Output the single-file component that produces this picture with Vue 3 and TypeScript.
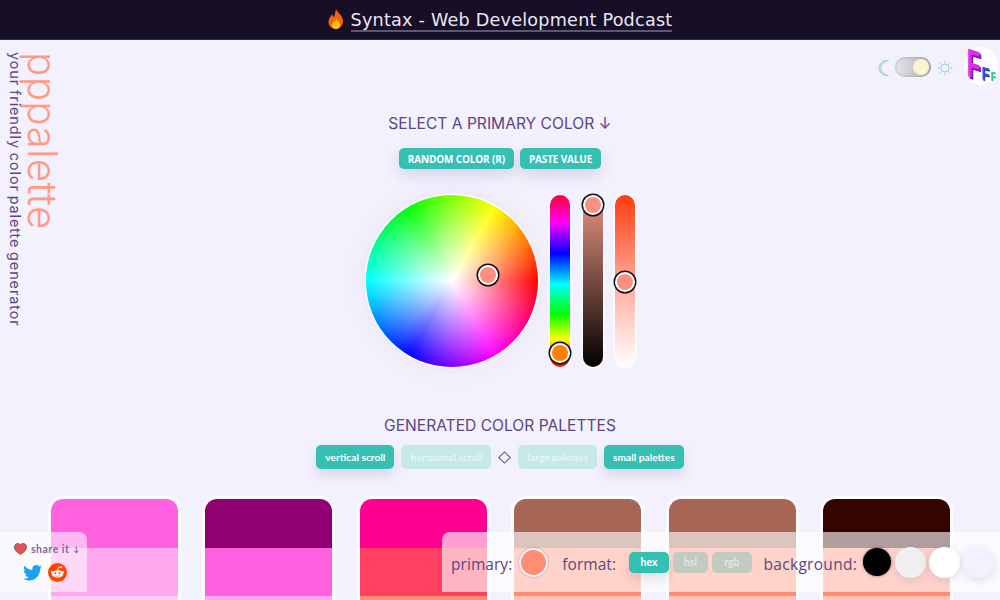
<script setup lang="ts">
interface Palette {
  bands: string[]
}

const primary = '#ff8d72'

const palettes: Palette[] = [
  { bands: ['#ff60e0', '#ffa8f0', '#ffd0f7'] },
  { bands: ['#900070', '#ff60e0', '#ffa8f0'] },
  { bands: ['#ff0090', '#ff4060', '#ff9070'] },
  { bands: ['#a66555', primary, '#ffc6b8'] },
  { bands: ['#a66555', primary, '#ffc6b8'] },
  { bands: ['#340500', primary, '#ffc6b8'] },
]

const swatches = ['#000000', '#efefef', '#ffffff', '#f3f1fd']
</script>

<template>
  <div class="page">
    <header class="topbar">
      <svg class="flame" viewBox="0 0 16 20" width="16" height="20">
        <path d="M8 0c1 3 6 6 7 11 .6 5-3 9-7 9s-8-3-7.500-8C1 9 3 7 4 5c.5 1.500 1 2.500 2 3 .8-2.500 1.500-5 2-8z" fill="#f4600c" />
        <path d="M8 9c.5 2 4 4 4 7 0 2.500-2 4-4 4s-4-1.500-4-4c0-2 1.500-3 2-4 .5.700 1 1 1.300 1 .3-1.300.4-2.800.7-4z" fill="#ffc21a" />
      </svg>
      <a class="topbar-link">Syntax - Web Development Podcast</a>
    </header>

    <div class="brand">
      <h1 class="brand-name">pppalette</h1>
      <p class="brand-tag">your friendly color palette generator</p>
    </div>

    <div class="theme">
      <svg class="moon" viewBox="0 0 12 18" width="12" height="18">
        <path d="M10.500 1.500C6 2.500 3 5.500 3 9s3 6.500 7.500 7.500C5 17 1 13.500 1 9s4-8 9.500-7.500z" fill="#bfe6e2" stroke="#8fd2cc" stroke-width=".8" />
      </svg>
      <div class="switch"><span class="knob" /></div>
      <svg class="sun" viewBox="0 0 18 18" width="16" height="16" fill="none" stroke="#8fd2cc" stroke-width="1.100">
        <circle cx="9" cy="9" r="4.500" />
        <path d="M9 .5v3M9 14.500v3M.5 9h3M14.500 9h3M3 3l2 2M13 13l2 2M15 3l-2 2M5 13l-2 2" />
      </svg>
      <div class="logo">
        <span class="logo-f big">F</span><span class="logo-f mid">F</span><span class="logo-f small">F</span>
      </div>
    </div>

    <main class="main">
      <h2 class="heading first">SELECT A PRIMARY COLOR ↓</h2>
      <div class="actions">
        <button class="btn">RANDOM COLOR (R)</button>
        <button class="btn">PASTE VALUE</button>
      </div>

      <section class="picker">
        <div class="wheel">
          <span class="handle wheel-handle" />
        </div>
        <div class="bar bar-hue"><span class="handle hue-handle" /></div>
        <div class="bar bar-value"><span class="handle value-handle" /></div>
        <div class="bar bar-sat"><span class="handle sat-handle" /></div>
      </section>

      <h2 class="heading second">GENERATED COLOR PALETTES</h2>
      <div class="options">
        <button class="chip">vertical scroll</button>
        <button class="chip off">horizontal scroll</button>
        <span class="diamond" />
        <button class="chip off">large palettes</button>
        <button class="chip">small palettes</button>
      </div>

      <section class="palettes">
        <article v-for="(p, i) in palettes" :key="i" class="card">
          <div v-for="(band, j) in p.bands" :key="j" class="band" :style="{ background: band }" />
        </article>
      </section>
    </main>

    <aside class="share">
      <div class="share-title">
        <svg viewBox="0 0 14 13" width="13" height="12">
          <path d="M7 12.500C3 9.800.5 7.500.5 4.300.5 2 2.300.5 4 .5c1.300 0 2.300.7 3 1.800C7.700 1.200 8.700.5 10 .5c1.700 0 3.500 1.500 3.500 3.800 0 3.200-2.500 5.500-6.500 8.200z" fill="#e8505b" stroke="#7c5a3c" stroke-width="1" />
        </svg>
        <span>share it</span><span class="share-arrow">↓</span>
      </div>
      <div class="share-icons">
        <svg viewBox="0 0 24 20" width="19" height="16">
          <path d="M24 2.400c-.9.400-1.800.7-2.800.8 1-.6 1.800-1.600 2.200-2.700-1 .6-2 1-3.100 1.200A4.900 4.900 0 0 0 11.900 6.200C7.800 6 4.200 4 1.700.9c-1.300 2.200-.7 5.100 1.500 6.600-.8 0-1.600-.2-2.200-.6 0 2.300 1.600 4.400 3.900 4.900-.7.200-1.500.2-2.200.1.600 2 2.400 3.400 4.600 3.400A9.900 9.900 0 0 1 0 17.300 14 14 0 0 0 7.500 19.500c9.100 0 14.300-7.700 14-14.600 1-.7 1.800-1.600 2.500-2.500z" fill="#1da1f2" />
        </svg>
        <svg viewBox="0 0 20 20" width="19" height="19">
          <circle cx="10" cy="10" r="10" fill="#ff4500" />
          <ellipse cx="10" cy="11.500" rx="6" ry="4" fill="#fff" />
          <circle cx="4.500" cy="9.800" r="1.300" fill="#fff" />
          <circle cx="15.500" cy="9.800" r="1.300" fill="#fff" />
          <circle cx="14" cy="4.500" r="1.100" fill="#fff" />
          <path d="M10 8l1-3.500 3 .3" fill="none" stroke="#fff" stroke-width=".8" />
          <circle cx="7.800" cy="10.800" r="1" fill="#ff4500" />
          <circle cx="12.200" cy="10.800" r="1" fill="#ff4500" />
          <path d="M7.800 13.300c1.300.9 3.100.9 4.400 0" fill="none" stroke="#ff4500" stroke-width=".7" />
        </svg>
      </div>
    </aside>

    <aside class="settings">
      <span class="label">primary:</span>
      <span class="primary-dot" :style="{ background: primary }" />
      <span class="label format">format:</span>
      <div class="formats">
        <button class="chip mini">hex</button>
        <button class="chip mini off">hsl</button>
        <button class="chip mini off">rgb</button>
      </div>
      <span class="label bg">background:</span>
      <div class="swatches">
        <span
          v-for="(c, i) in swatches"
          :key="c"
          class="swatch"
          :class="{ dark: i === 0 }"
          :style="{ background: c }"
        />
      </div>
    </aside>
  </div>
</template>

<style scoped>
.page {
  position: relative;
  height: 600px;
  overflow: hidden;
  background: #f3f1fd;
  color: #5b4680;
  font-family: Inter, "Liberation Sans", sans-serif;
}

.topbar {
  display: flex;
  align-items: center;
  justify-content: center;
  gap: 7px;
  height: 40px;
  padding-top: 2px;
  box-sizing: border-box;
  background: #170f27;
  border-bottom: 1px solid #2f2a3c;
}

.flame {
  margin-top: -3px;
}

.topbar-link {
  color: #ebe7f5;
  font-family: "DejaVu Sans", sans-serif;
  font-size: 17.6px;
  letter-spacing: 0.22px;
  line-height: 20px;
  border-bottom: 2px solid #5c5573;
}

.brand {
  position: absolute;
  top: 52px;
  left: 6px;
  display: flex;
  flex-direction: column;
  writing-mode: vertical-rl;
}

.brand-name {
  margin: 0;
  color: #ff9b85;
  font-size: 40.500px;
  font-weight: 300;
  line-height: 37px;
  letter-spacing: 0.3px;
}

.brand-tag {
  margin: 0;
  color: #5b4680;
  font-size: 14.500px;
  font-weight: 400;
  line-height: 18px;
  letter-spacing: 0.85px;
  word-spacing: -1px;
}

.theme {
  position: absolute;
  top: 47px;
  right: 2px;
  display: flex;
  align-items: center;
  gap: 6px;
}

.moon {
  margin-top: 3px;
}

.switch {
  display: flex;
  justify-content: flex-end;
  align-items: center;
  width: 36px;
  height: 20px;
  margin-left: -1px;
  margin-top: 2px;
  box-sizing: border-box;
  padding-right: 2px;
  border-radius: 10px;
  background: linear-gradient(90deg, #e6e5ea, #b0aeb8);
  box-shadow: inset 0 0 3px rgba(0, 0, 0, 0.25);
}

.knob {
  width: 16px;
  height: 16px;
  border-radius: 50%;
  background: #fbf5cf;
}

.sun {
  margin-top: 3px;
}

.logo {
  display: flex;
  align-items: flex-end;
  justify-content: center;
  width: 34px;
  height: 38px;
  margin-left: 5px;
  padding-bottom: 4px;
  box-sizing: border-box;
  border-radius: 50%;
  background: #fff;
  font-family: "Liberation Sans", sans-serif;
  font-weight: 700;
}

.logo-f {
  display: flex;
  justify-content: center;
  flex: none;
  line-height: 0.72;
}

.logo-f.big {
  width: 13px;
  color: #e22be8;
  font-size: 40px;
  margin-bottom: 2px;
  transform: scaleX(0.55) skewY(10deg);
  text-shadow: 2px 1px 0 #7a1ec0, 3px 2px 0 #4a1ea0;
}

.logo-f.mid {
  width: 9px;
  color: #2e5bf0;
  font-size: 18px;
  margin-left: 1px;
  transform: scaleX(0.72) skewY(10deg);
  text-shadow: 1px 1px 0 #1a2f90;
}

.logo-f.small {
  width: 6px;
  color: #22e0a0;
  font-size: 13px;
  transform: scaleX(0.6) skewY(10deg);
  text-shadow: 1px 0 0 #109068;
}

.main {
  display: flex;
  flex-direction: column;
  align-items: center;
}

.heading {
  margin: 0;
  color: #5b4680;
  font-size: 15.600px;
  font-weight: 400;
  line-height: 20px;
  text-align: center;
}

.heading.first {
  margin-top: 74px;
}

.heading.second {
  margin-top: 49px;
}

.actions {
  display: flex;
  gap: 6px;
  margin-top: 14px;
}

.btn {
  height: 21px;
  padding: 0 9px;
  border: none;
  border-radius: 5px;
  background: #35c0b3;
  box-shadow: 0 6px 14px rgba(60, 50, 110, 0.16);
  color: #fff;
  font-family: "Open Sans", sans-serif;
  font-size: 10px;
  font-weight: 700;
  letter-spacing: -0.15px;
}

.picker {
  display: flex;
  gap: 12px;
  margin-top: 26px;
  margin-left: 1px;
}

.wheel {
  position: relative;
  width: 172px;
  height: 172px;
  border-radius: 50%;
  background:
    radial-gradient(circle closest-side, #fff 0%, rgba(255, 255, 255, 0) 100%),
    conic-gradient(from 90deg, #f00, #f0f, #00f, #0ff, #0f0, #ff0, #f00);
  box-shadow: 0 0 0 1.500px #fff, 0 0 24px rgba(80, 60, 130, 0.08);
}

.bar {
  position: relative;
  width: 20px;
  height: 172px;
  border-radius: 10px;
  box-shadow: 0 0 0 1.500px rgba(255, 255, 255, 0.7);
}

.bar-hue {
  background: linear-gradient(180deg, #ff0040 0%, #ff0070 5%, #f0f 16%, #00f 34%, #0ff 52%, #0f0 69%, #ff0 84%, #f00 100%);
}

.bar-value {
  margin-left: 1px;
  background: linear-gradient(180deg, #ec9482 0%, #000 100%);
}

.bar-sat {
  background: linear-gradient(180deg, #ff3d10 0%, #ffb0a0 55%, #fff 100%);
}

.handle {
  position: absolute;
  box-sizing: border-box;
  width: 20px;
  height: 20px;
  border: 2px solid #fff;
  border-radius: 50%;
  background: #fa9080;
  box-shadow: 0 0 0 1.500px #15101c;
}

.wheel-handle {
  top: 70px;
  left: 112px;
}

.hue-handle {
  top: 148px;
  left: 0;
  background: #ff8000;
}

.value-handle {
  top: 0;
  left: 0;
}

.sat-handle {
  top: 77px;
  left: 0;
}

.options {
  display: flex;
  align-items: center;
  gap: 7px;
  margin-top: 9px;
}

.chip {
  height: 24px;
  padding: 0 9px;
  border: none;
  border-radius: 5px;
  background: #35c0b3;
  box-shadow: 0 6px 12px rgba(60, 50, 110, 0.14);
  color: #fff;
  font-family: Lato, sans-serif;
  font-size: 10.200px;
  font-weight: 700;
}

.chip.off {
  background: #c4e9e7;
  box-shadow: none;
  color: #e7f6f5;
}

.diamond {
  width: 7px;
  height: 7px;
  margin: 0 2px;
  border: 1.500px solid #5b4680;
  transform: rotate(45deg);
}

.palettes {
  display: grid;
  grid-template-columns: repeat(6, 127px);
  column-gap: 27.400px;
  margin-top: 30px;
  margin-left: 1px;
}

.card {
  display: flex;
  flex-direction: column;
  height: 145px;
  overflow: hidden;
  border-radius: 12px;
  box-shadow: 0 0 0 3px rgba(255, 255, 255, 0.75);
}

.band {
  flex: 0 0 48.500px;
}

.share {
  position: absolute;
  left: 0;
  top: 532px;
  width: 87px;
  height: 60px;
  box-sizing: border-box;
  padding-top: 11px;
  border-top-right-radius: 8px;
  background: rgba(255, 255, 255, 0.55);
}

.share-title {
  display: flex;
  align-items: center;
  gap: 4px;
  margin-left: 14px;
  color: #7a6a9c;
  font-family: Lato, sans-serif;
  font-size: 10.500px;
  font-weight: 700;
  letter-spacing: 0.5px;
}

.share-arrow {
  font-size: 8px;
}

.share-icons {
  display: flex;
  align-items: center;
  gap: 6px;
  margin: 8px 0 0 23px;
}

.settings {
  position: absolute;
  left: 442px;
  right: 0;
  top: 532px;
  height: 60px;
  display: flex;
  align-items: center;
  box-sizing: border-box;
  padding-left: 9px;
  border-top-left-radius: 8px;
  background: rgba(255, 255, 255, 0.62);
}

.label {
  margin-top: 3px;
  color: #5b4680;
  font-family: "Open Sans", sans-serif;
  font-size: 15.500px;
  letter-spacing: 0.05px;
  white-space: nowrap;
}

.primary-dot {
  flex: none;
  box-sizing: border-box;
  width: 29px;
  height: 29px;
  margin-left: 7px;
  border: 2px solid #f4f2f8;
  border-radius: 50%;
  box-shadow: 0 0 2px rgba(90, 70, 120, 0.5);
}

.format {
  margin-left: 14px;
}

.formats {
  display: flex;
  gap: 4px;
  margin-left: 13px;
}

.chip.mini {
  height: 21px;
  padding: 0 11px;
  font-size: 10.500px;
}

.chip.mini:first-child {
  padding: 0 11.500px;
}

.chip.mini:last-child {
  padding: 0 12px;
}

.chip.mini.off {
  background: rgba(170, 200, 190, 0.7);
  color: #dfe8e4;
}

.bg {
  margin-left: 12px;
  letter-spacing: 0.3px;
}

.swatches {
  display: flex;
  align-items: center;
  gap: 3px;
  margin-left: 6px;
}

.swatch {
  flex: none;
  width: 31px;
  height: 31px;
  border-radius: 50%;
  box-shadow: 0 2px 8px rgba(90, 70, 130, 0.18);
}

.swatch.dark {
  width: 28px;
  height: 28px;
  margin-right: 1px;
  box-shadow: 0 0 3px rgba(40, 30, 60, 0.6);
}
</style>
